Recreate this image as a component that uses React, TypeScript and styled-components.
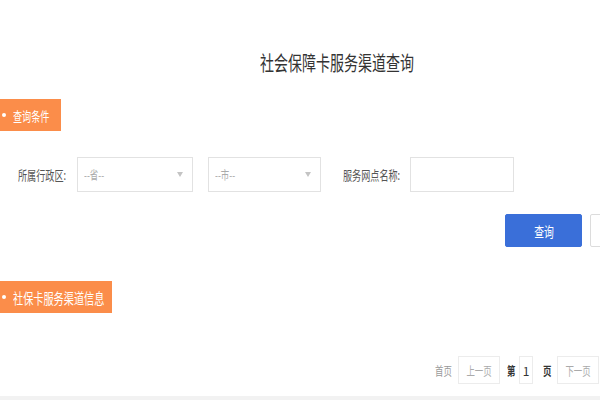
import styled, { createGlobalStyle } from "styled-components"

const GlobalStyle = createGlobalStyle`
  html, body {
    margin: 0;
    padding: 0;
    background: #fff;
  }
  body {
    font-family: "Noto Sans CJK SC", "Noto Sans", sans-serif;
    color: #333;
  }
`

// the source page is squeezed sideways, so text is narrowed
const Narrow = styled.span<{ $origin?: string }>`
  display: inline-block;
  white-space: nowrap;
  transform: scaleX(0.7);
  transform-origin: ${(p) => p.$origin ?? "left"} center;
`

const Page = styled.div`
  width: 600px;
  height: 400px;
  overflow: hidden;
  display: flex;
  flex-direction: column;
`

const Title = styled.h1`
  margin: 49px 0 0;
  padding-left: 73px;
  height: 28px;
  line-height: 28px;
  text-align: center;
  font-size: 20px;
  font-weight: 400;
  color: #333;
`

const Tag = styled.div<{ $width: number; $top: number; $size: number }>`
  position: relative;
  box-sizing: border-box;
  width: ${(p) => p.$width}px;
  height: 32px;
  margin-top: ${(p) => p.$top}px;
  padding-left: 13px;
  display: flex;
  align-items: center;
  background: #fb8d4a;
  color: #fff;
  font-size: ${(p) => p.$size}px;

  &::before {
    content: "";
    position: absolute;
    left: 2px;
    top: 50%;
    width: 4px;
    height: 4px;
    margin-top: -2px;
    border-radius: 50%;
    background: #fff;
  }
`

const FormRow = styled.div`
  margin-top: 26px;
  padding-left: 18px;
  height: 35px;
  display: flex;
  align-items: center;
`

const Label = styled.label<{ $width: number }>`
  flex: none;
  width: ${(p) => p.$width}px;
  font-size: 13px;
  color: #555;
`

const Select = styled.div<{ $width: number; $gap: number }>`
  flex: none;
  box-sizing: border-box;
  width: ${(p) => p.$width}px;
  height: 35px;
  margin-right: ${(p) => p.$gap}px;
  padding: 0 6px;
  border: 1px solid #e2e2e2;
  display: flex;
  align-items: center;
  justify-content: space-between;
  font-size: 12px;
  color: #aaa;
`

const Arrow = styled.span`
  width: 0;
  height: 0;
  margin-right: 3px;
  border-left: 3px solid transparent;
  border-right: 3px solid transparent;
  border-top: 5px solid #c4c4c4;
`

const Input = styled.div`
  flex: none;
  box-sizing: border-box;
  width: 104px;
  height: 35px;
  border: 1px solid #e2e2e2;
`

const ButtonRow = styled.div`
  margin-top: 22px;
  padding-left: 505px;
  display: flex;
  gap: 8px;
`

const Button = styled.button<{ $primary?: boolean }>`
  flex: none;
  box-sizing: border-box;
  width: 77px;
  height: 33px;
  padding: 0;
  border-radius: 2px;
  border: 1px solid ${(p) => (p.$primary ? "#3a6fd9" : "#dcdcdc")};
  background: ${(p) => (p.$primary ? "#3a6fd9" : "#fff")};
  color: ${(p) => (p.$primary ? "#fff" : "#666")};
  font-family: inherit;
  font-size: 14px;
  text-align: center;
`

const Pager = styled.div`
  margin-top: 43px;
  padding-left: 435px;
  height: 28px;
  display: flex;
  align-items: center;
  font-size: 12px;
`

const PagerText = styled.span<{ $dark?: boolean; $w: number; $gap: number }>`
  flex: none;
  width: ${(p) => p.$w}px;
  margin-right: ${(p) => p.$gap}px;
  color: ${(p) => (p.$dark ? "#333" : "#999")};
  font-weight: ${(p) => (p.$dark ? 700 : 400)};
`

const PagerBox = styled.span<{ $w: number; $gap: number; $dark?: boolean }>`
  flex: none;
  box-sizing: border-box;
  width: ${(p) => p.$w}px;
  height: 28px;
  margin-right: ${(p) => p.$gap}px;
  border: 1px solid #ececec;
  display: flex;
  align-items: center;
  justify-content: center;
  color: ${(p) => (p.$dark ? "#333" : "#aaa")};
`

const Footer = styled.div`
  margin-top: auto;
  height: 4px;
  background: #f2f2f2;
`

export default function App() {
  return (
    <>
      <GlobalStyle />
      <Page>
        <Title>
          <Narrow $origin="center">社会保障卡服务渠道查询</Narrow>
        </Title>

        <Tag $width={61} $top={22} $size={13}>
          <Narrow>查询条件</Narrow>
        </Tag>

        <FormRow>
          <Label $width={59}>
            <Narrow>所属行政区:</Narrow>
          </Label>
          <Select $width={116} $gap={15}>
            <Narrow>--省--</Narrow>
            <Arrow />
          </Select>
          <Select $width={113} $gap={22}>
            <Narrow>--市--</Narrow>
            <Arrow />
          </Select>
          <Label $width={67}>
            <Narrow>服务网点名称:</Narrow>
          </Label>
          <Input />
        </FormRow>

        <ButtonRow>
          <Button $primary>
            <Narrow $origin="center">查询</Narrow>
          </Button>
          {/* reset button runs off the right edge; its label is not visible */}
          <Button aria-label="重置" />
        </ButtonRow>

        <Tag $width={112} $top={34} $size={14.5}>
          <Narrow>社保卡服务渠道信息</Narrow>
        </Tag>

        <Pager>
          <PagerText $w={17} $gap={6}>
            <Narrow>首页</Narrow>
          </PagerText>
          <PagerBox $w={42} $gap={7}>
            <Narrow $origin="center">上一页</Narrow>
          </PagerBox>
          <PagerText $dark $w={10} $gap={2}>
            <Narrow>第</Narrow>
          </PagerText>
          <PagerBox $dark $w={14} $gap={10}>
            1
          </PagerBox>
          <PagerText $dark $w={10} $gap={4}>
            <Narrow>页</Narrow>
          </PagerText>
          <PagerBox $w={42} $gap={0}>
            <Narrow $origin="center">下一页</Narrow>
          </PagerBox>
        </Pager>

        <Footer />
      </Page>
    </>
  )
}
